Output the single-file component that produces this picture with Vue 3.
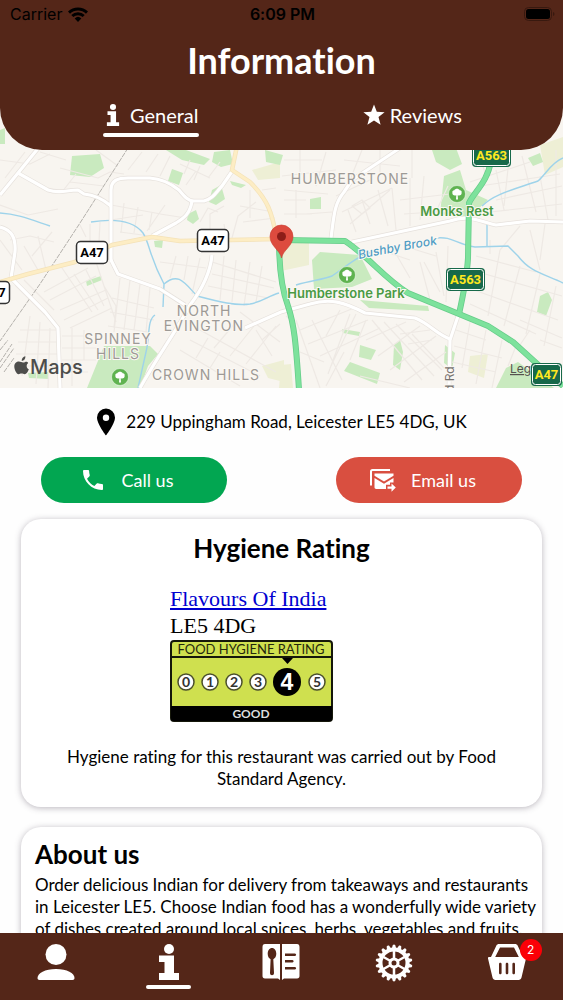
<script setup>
import { ref } from 'vue'

const activeTab = ref('general')
const basketCount = ref(2)

// Map geometry
const parks = [
  'M72 156l28-2 4 14-14 9-20-2z',
  'M166 150h20l24 9-6 6-22-5z',
  'M214 152l16-2 3 14-12 3-9-5z',
  'M172 169l11 4-4 12-11-4z',
  'M212 190l9-5 4 14-9 6-7-3z',
  'M188 214l8-4 3 9-6 5-6-4z',
  'M154 241l9-1-1 8-7-1z',
  'M86 281l15-5 1 4-15 6z',
  'M104 346h46l8 8-10 12-8 22H87z',
  'M28 373l20-1 1 7-20-1z',
  'M0 130l5-2v16H0z',
  'M432 150l24-2 6 16-12 6-14-8z',
  'M444 176l16-6 6 20 22 10-20 18-28-4z',
  'M312 260l8-8 40 3 12 24-20 8-38 2z',
  'M360 300l68 6 1 5-60-3z',
  'M310 199l11-2v12h-11z',
  'M360 345l16 5-5 10-12-3z',
  'M350 362l30 11-3 11-33-13z',
  'M394 345l6-5 3 12-3 18-7-5z',
  'M342 329l18 3-1 4-16-3z',
  'M540 296l8-4 4 8-6 16-9-4z',
  'M506 368l12-6 36 26h-58z',
  'M445 345l10 8-3 16-8-6z',
  'M265 150l18 5-3 10-14-3z',
  'M230 181l16 4-5 3-9-3z',
  'M528 158l12-5 3 9-10 4z'
]

const paleAreas = [
  'M252 170l28-8v16l-22 2z',
  'M470 356l18-2-4 24-16-6z',
  'M262 366l22-6v22l-16-4z',
  'M281 235l28 4v26l-28 6z',
  'M281 365l10-1 2 24h-14z',
  'M540 145l23-8v30l-18 8z'
]

const minorStreets = [
  'M0 160l30 4 20-10M5 178l20-26M40 152l26 8M60 168l38 10 12-6 14 2M70 182l34 4M62 192l14-18M96 150l22 16',
  'M0 205l28 10 30-6M10 240l20-4 24 6M24 246l14 24M38 236l8 34M0 240l22 30M52 232l-20 24M80 225l6 12M90 224v18M100 222l-1 20',
  'M111 205l50 9M111 220l32-5M124 203l-3 30M138 207l-4 26M152 212l-3 18M165 205l-18 26M120 232l30 4M160 214l26 4',
  'M180 164l30 14M190 160l-6 14M200 166l-6 14M128 170l14-18M146 172l12-18M160 176l10-20M208 178l12-16M186 185l10-14',
  'M200 222l8-14 10 4M210 236v-22l14-8M232 238l6-22 18-14M240 206l28 5M250 190v28M226 236l-2-12M243 222l32-4M262 190l14-2',
  'M15 285l30 30M24 280l30 30M62 268l30 44M74 274l24 36M86 270l18 36M60 310l46-20M64 320l44-22M70 328l42-20M50 300l46-24M44 292l44-24',
  'M120 278l-6 54M130 280l-6 50M140 284l-6 46M150 288l-4 44M112 298l42 10M110 312l44 8M108 326l40 6M104 286l12 20-2 22M96 262l20 60',
  'M20 330h40M18 342h42M16 354h44M22 366h38M30 316l-8 60M40 322l-4 62M50 328l-2 60M62 336h26M62 348h38M62 360h34M62 372h26M72 328v58M84 330v30',
  'M160 262l46 6M176 256l-6 22M188 256l-4 24M200 258l-8 36M212 262l64 20M212 274l62 14M208 286l60 12M224 256l-4 44M236 260l-4 42M250 262l-6 44M262 266l-6 36',
  'M190 340l70 36M200 330l76 42M214 348l22-26M230 356l24-30M246 364l30-38M180 350l60 36M196 358l12-20M210 368l10-16M240 312l40 30M256 330l16 26M262 340l18-16',
  'M284 160h38M282 176l54-6M300 150v30M326 152l-10 34M284 190l44 4M284 200h22M296 190v28M306 214l26-2M284 214h28M344 160l56 6M362 150l-12 30M380 150v24',
  'M342 212l50-24M350 224l40-34M356 232l-8-22M362 200l8 24M378 190l10 36M392 188l4 42M410 178v48M424 176l-4 44M400 200l66-8M404 214l60-4M336 196l34-16M352 206l10-6 8 8-8 6z',
  'M412 150v28M448 186l-14 30M478 150l8 26M496 170l8 40M510 150l-6 56M522 156l14 56M540 176l8 44M480 186l80-12M490 212l72-8M496 200l66-14M470 182l60-20M556 150v66',
  'M424 262l16 30M436 252l8 44M410 248l26 8M448 246l-2 56M396 254l14 24M380 250l30 10M430 300l-10-38M476 256l60 16M478 272l84 24M474 290l84 30M470 304l66 30M500 250l-12 66M520 266l-16 60M540 274l-14 60M556 286l-12 60M490 240v14M500 250l20-24M530 230l10 40M545 224l-5 36',
  'M300 330l54-22M308 344l60-24M320 356l60-28M330 368l26-54M312 320l30 60M296 320l24 68M350 314l-22 60M366 320l-16 40M300 352l24 10M326 386l18-34M340 310l-14 26M286 316l10 8',
  'M372 320l50 60M384 322l50 54M396 324l46 46M366 340l40-18M378 356l42-30M390 370l46-34M404 382l42-30M412 334l32 34M360 376l50 12M400 334l30-4M408 344l24-4',
  'M456 330l30 10M454 346l48 12M452 362l44 10M470 322l-8 46M486 330l-10 54M502 340l-10 48M516 346l-8 20M530 330l-12 18M540 340l22 8M520 320l42 18'
]

const railway = 'M128 148L80 223 40 284 0 341M0 362l12-18M0 368l14-20M4 372l10-14M0 350l8-10'

const water = [
  'M0 213C18 214 32 220 50 226',
  'M91 222C110 219 132 219 143 233C150 244 149 256 164 284',
  'M164 284C178 272 184 282 197 296C220 302 236 306 250 304C262 302 268 296 279 293',
  'M164 284L163 307',
  'M155 315C147 320 150 336 146 352L138 388',
  'M296 285C312 280 322 280 332 276C350 264 354 258 372 252',
  'M436 238C452 236 456 244 475 247L508 246L518 256C530 272 544 274 563 283',
  'M482 206C494 194 512 190 538 181C546 174 552 162 563 158',
  'M487 222V247'
]

const whiteRoads = [
  'M40 146L18 173L0 195',
  'M18 173L48 190C60 194 66 190 78 190L84 194C96 195 104 200 111 206',
  'M111 262V190C111 180 118 178 128 178H150C164 179 174 186 179 190C184 196 188 201 194 201H204C214 198 216 192 222 186L233 170',
  'M192 201C190 214 184 218 176 223L152 236',
  'M0 227C12 230 16 238 15 252L11 278L45 312L58 328L60 388',
  'M111 260L118 274L160 289L185 305',
  'M212 255C210 276 200 292 190 305C176 332 160 352 140 388',
  'M245 328L281 312L310 304C330 298 344 302 365 313L415 318C430 324 436 334 450 339',
  'M458 316L450 340L449 388',
  'M352 242L450 221C470 214 480 222 496 225L530 221L563 222',
  'M331 238C334 216 334 204 344 192L352 180L400 148'
]

const yellowRoads = [
  'M0 282L28 274L75 262L112 245L152 237L180 241L276 239',
  'M237 146L232 170L250 182C268 200 272 212 277 240'
]

const greenRoads = [
  'M281 240L345 241C368 256 384 278 408 293L459 314L488 326L513 342L545 371L563 386',
  'M279 240C279 268 282 290 288 306C294 324 296 342 299 390',
  'M491 160C488 182 474 192 469 203L468 258C467 276 463 296 459 314'
]

const areaLabels = [
  { x: 350, y: 184, text: 'HUMBERSTONE' },
  { x: 204, y: 316, text: 'NORTH' },
  { x: 204, y: 331, text: 'EVINGTON' },
  { x: 118, y: 344, text: 'SPINNEY' },
  { x: 118, y: 359, text: 'HILLS' },
  { x: 206, y: 380, text: 'CROWN HILLS' }
]

const trees = [
  { x: 457, y: 194 },
  { x: 347, y: 275 },
  { x: 120, y: 377 }
]

const plainShields = [
  { x: 197, y: 229, text: 'A47' },
  { x: 76, y: 241, text: 'A47' },
  { x: -22, y: 281, text: 'A47' }
]

const greenShields = [
  { x: 472, y: 144, width: 39, text: 'A563' },
  { x: 446, y: 268, width: 39, text: 'A563' },
  { x: 531, y: 363, width: 31, text: 'A47' }
]

const ratings = [
  { value: 0, x: 16 },
  { value: 1, x: 40 },
  { value: 2, x: 64 },
  { value: 3, x: 88 },
  { value: 5, x: 147 }
]

const gearTeeth = Array.from({ length: 18 }, (_, i) => i * 20)
</script>

<template>
  <div class="screen">
    <header class="header">
      <div class="status">
        <span class="carrier">
          Carrier
          <svg width="20" height="15" viewBox="0 0 20 15" aria-hidden="true">
            <g fill="none" stroke="#000" stroke-width="3">
              <path d="M1 5.600A13 13 0 0 1 19 5.600" />
              <path d="M4.300 9A8.300 8.300 0 0 1 15.700 9" />
            </g>
            <path d="M10 15l-3.300-3.600a4.800 4.800 0 0 1 6.600 0z" />
          </svg>
        </span>
        <strong>6:09 PM</strong>
        <svg class="battery" width="31" height="14" viewBox="0 0 31 14" aria-hidden="true">
          <rect x=".5" y=".5" width="27" height="13" rx="4" fill="none" stroke="#38190f" />
          <rect x="2" y="2" width="24" height="10" rx="2.500" />
          <path d="M29 5c2 .8 2 3.200 0 4z" fill="#38190f" />
        </svg>
      </div>
      <h1>Information</h1>
      <div class="tabs">
        <div class="tab-cell">
          <button class="tab" :class="{ active: activeTab === 'general' }" @click="activeTab = 'general'">
            <svg class="tab-info" width="14" height="22" viewBox="0 0 20 36" aria-hidden="true">
              <circle cx="10" cy="5" r="5" />
              <path d="M1 12h14v18h5v6H0v-6h6V18H1z" />
            </svg>
            General
          </button>
        </div>
        <div class="tab-cell">
          <button class="tab" :class="{ active: activeTab === 'reviews' }" @click="activeTab = 'reviews'">
            <svg width="22" height="22" viewBox="0 0 22 22" aria-hidden="true">
              <path d="M11 .5l2.800 7.300 7.800.4-6.100 4.900 2.100 7.700-6.600-4.300-6.600 4.300 2.100-7.700L.4 8.200l7.800-.4z" />
            </svg>
            Reviews
          </button>
        </div>
      </div>
    </header>

    <main class="content">
      <svg class="map" viewBox="0 100 563 288" preserveAspectRatio="xMidYMid slice" role="img" aria-label="Map">
        <rect y="100" width="563" height="288" fill="#f8f5f0" />
        <path v-for="d in paleAreas" :key="d" :d="d" fill="#eeefd5" />
        <path v-for="d in parks" :key="d" :d="d" fill="#c9eabf" />
        <path v-for="d in minorStreets" :key="d" :d="d" class="minor" />
        <path :d="railway" class="railway" />
        <path v-for="d in water" :key="d" :d="d" class="water" />
        <path v-for="d in whiteRoads" :key="d" :d="d" class="road-edge" />
        <path v-for="d in whiteRoads" :key="d" :d="d" class="road-white" />
        <path v-for="d in yellowRoads" :key="d" :d="d" class="road-yellow-edge" />
        <path v-for="d in yellowRoads" :key="d" :d="d" class="road-yellow" />
        <path v-for="d in greenRoads" :key="d" :d="d" class="road-green-edge" />
        <path v-for="d in greenRoads" :key="d" :d="d" class="road-green" />

        <text v-for="label in areaLabels" :key="label.text" :x="label.x" :y="label.y" class="area">{{ label.text }}</text>
        <path id="brook" d="M359 259Q398 251 440 244" fill="none" />
        <text class="brook"><textPath href="#brook">Bushby Brook</textPath></text>
        <g v-for="tree in trees" :key="tree.x" :transform="`translate(${tree.x} ${tree.y})`">
          <circle r="8.500" fill="#5fb350" stroke="#fff" stroke-opacity=".5" />
          <path
            d="M-1 5.500l.3-4.200C-3 2-5 .8-4.600-1.200c-.5-1.600.8-2.800 2-2.600C-2-5.800 2-5.800 2.600-3.800c1.400-.2 2.500 1 2 2.600C5 .8 3 2 .7 1.300L1 5.500z"
            fill="#fff"
          />
        </g>
        <text x="457" y="216" class="park">Monks Rest</text>
        <text x="346" y="298" class="park">Humberstone Park</text>
        <text transform="translate(454 392) rotate(-90)" class="street">d Rd</text>

        <a href="#legal"><text x="510" y="373" class="legal">Legal</text></a>

        <g v-for="shield in plainShields" :key="shield.x" :transform="`translate(${shield.x} ${shield.y})`">
          <rect x=".5" y=".5" width="31" height="22" rx="4" fill="#fff" stroke="#333" stroke-width="1.500" />
          <text x="16" y="16" class="shield">{{ shield.text }}</text>
        </g>
        <g v-for="shield in greenShields" :key="shield.y" :transform="`translate(${shield.x} ${shield.y})`">
          <rect :width="shield.width" height="23" rx="4" fill="#17694a" />
          <rect x="1.500" y="1.500" :width="shield.width - 3" height="20" rx="3" fill="none" stroke="#fff" />
          <text :x="shield.width / 2" y="16" class="shield yellow">{{ shield.text }}</text>
        </g>

        <path
          d="M281.500 258c-1.500-8-11.500-12-11.500-21.500a11.500 11.500 0 0 1 23 0c0 9.500-10 13.500-11.500 21.500z"
          fill="#dd4b3e"
          stroke="#c93c31"
          stroke-width=".6"
        />
        <circle cx="281.500" cy="236.500" r="4.500" fill="#8c1d18" />

        <g fill="#4d4d4b">
          <path
            d="M24.800 362.200c1.500-1 2.800-.2 3.400.7-2.200 1.500-2 5 .6 6.300-1 2.600-2.400 5-4.100 5-1.200 0-1.800-.7-3.100-.7s-2 .7-3 .7c-2.100 0-4.300-4.500-4.300-7.700 0-4.300 4-6 6.900-4.400 1.200.6 2.400.6 3.600.1z"
          />
          <path d="M21.700 361c-.2-2.600 1.600-4.300 3.700-4.700.3 2.600-1.500 4.600-3.700 4.700z" />
          <text x="30" y="374" class="maps-logo">Maps</text>
        </g>
      </svg>

      <p class="address">
        <svg width="20" height="28" viewBox="0 0 20 28" aria-hidden="true">
          <path
            fill-rule="evenodd"
            d="M10 .5A9 9 0 0 0 1 9.500C1 16 10 27.500 10 27.500S19 16 19 9.500A9 9 0 0 0 10 .5zm0 6a3.200 3.200 0 1 1 0 6.400 3.200 3.200 0 0 1 0-6.400z"
          />
        </svg>
        229 Uppingham Road, Leicester LE5 4DG, UK
      </p>

      <div class="actions">
        <button class="action call">
          <svg width="20" height="20" viewBox="3 3 18 18" aria-hidden="true">
            <path
              d="M6.620 10.790c1.440 2.830 3.760 5.140 6.590 6.590l2.200-2.200c.27-.27.67-.36 1.020-.24 1.120.37 2.330.57 3.570.57.550 0 1 .45 1 1V20c0 .55-.45 1-1 1-9.390 0-17-7.610-17-17 0-.55.45-1 1-1h3.500c.55 0 1 .45 1 1 0 1.250.2 2.450.57 3.570.11.35.03.74-.25 1.020l-2.200 2.200z"
            />
          </svg>
          Call us
        </button>
        <button class="action email">
          <svg width="26" height="23" viewBox="0 0 26 23" aria-hidden="true">
            <path d="M1 16.500V2.500C1 1.500 1.500 1 2.500 1H20" fill="none" stroke="#fff" stroke-width="2" />
            <path d="M4.500 4.500h19v2.200L14 12.500 4.500 6.700z" />
            <path d="M4.500 9l9.500 5.800L23.500 9v4.500H20v2.300h-4v4.200H6.200c-1 0-1.700-.7-1.700-1.700z" />
            <path d="M17.500 17.400h4v-2.900l4.300 4.100-4.300 4.100v-2.900h-4z" />
          </svg>
          Email us
        </button>
      </div>

      <section class="card hygiene">
        <h2>Hygiene Rating</h2>
        <div class="widget">
          <a href="#rating">Flavours Of India</a>
          <span>LE5 4DG</span>
          <svg width="163" height="82" viewBox="0 0 163 82" role="img" aria-label="Food hygiene rating: 4, good">
            <rect x="1" y="1" width="161" height="80" rx="3" fill="#cfe04f" stroke="#15170a" stroke-width="2" />
            <path d="M1 66h161v13a2 2 0 0 1-2 2H3a2 2 0 0 1-2-2z" />
            <path d="M1 17h161" stroke="#15170a" stroke-width="2" />
            <path d="M112 18h11l-5.500 6z" />
            <text x="81" y="14" class="fhr-title">FOOD HYGIENE RATING</text>
            <g v-for="item in ratings" :key="item.value">
              <circle :cx="item.x" cy="42" r="8" fill="#fff" stroke="#4b4f2c" stroke-width="1.500" />
              <text :x="item.x" y="47" class="fhr-digit">{{ item.value }}</text>
            </g>
            <circle cx="117" cy="42" r="14" />
            <text x="117" y="50" class="fhr-score">4</text>
            <text x="81" y="78" class="fhr-word">GOOD</text>
          </svg>
        </div>
        <p>Hygiene rating for this restaurant was carried out by Food Standard Agency.</p>
      </section>

      <section class="card about">
        <h2>About us</h2>
        <p>
          Order delicious Indian for delivery from takeaways and restaurants in Leicester LE5. Choose Indian food has a
          wonderfully wide variety of dishes created around local spices, herbs, vegetables and fruits.
        </p>
      </section>
    </main>

    <nav class="nav">
      <a href="#account" aria-label="Account">
        <svg width="38" height="36" viewBox="0 0 38 36">
          <circle cx="19" cy="10.500" r="10.500" />
          <path d="M.5 34C.5 29 8 25 19 25s18.500 4 18.500 9c0 1.300-.7 2-2 2h-33c-1.300 0-2-.7-2-2z" />
        </svg>
      </a>
      <a href="#info" aria-label="Information" class="current">
        <svg width="20" height="36" viewBox="0 0 20 36">
          <circle cx="10" cy="5" r="5" />
          <path d="M0 11.500h15V29h5v7H0v-7h5.500V18H0z" />
        </svg>
      </a>
      <a href="#menu" aria-label="Menu">
        <svg width="38" height="36" viewBox="0 0 38 36">
          <path
            fill-rule="evenodd"
            d="M3 0h15v36l-2-1.500H3C1.300 34.500.5 33.500.5 32V3C.5 1 1.300 0 3 0zm7 4c-2.600 0-4.300 2.700-4.300 5.800 0 2.600 1.100 4.600 2.900 5.400L8 29c0 3 4 3 4 0l-.7-13.800c1.800-.8 3-2.800 3-5.400C14.300 6.700 12.600 4 10 4z"
          />
          <path
            fill-rule="evenodd"
            d="M35 0H20v36l2-1.500h13c1.700 0 2.500-1 2.500-2.500V3c0-2-.8-3-2.500-3zM23 9.500h10c1.500 0 1.500 2.500 0 2.500H23zM23 16h7.500c1.500 0 1.500 2.500 0 2.500H23zM23 23h10c1.500 0 1.500 2.500 0 2.500H23z"
          />
        </svg>
      </a>
      <a href="#settings" aria-label="Settings">
        <svg width="38" height="38" viewBox="-19 -19 38 38">
          <circle r="13.500" fill="none" stroke="#fff" stroke-width="4" />
          <circle r="4" fill="none" stroke="#fff" stroke-width="3" />
          <path
            d="M0-4v-8M0 4v8M3.500-2l7-4M3.500 2l7 4M-3.500-2l-7-4M-3.500 2l-7 4"
            stroke="#fff"
            stroke-width="2.500"
          />
          <path
            v-for="angle in gearTeeth"
            :key="angle"
            d="M-2.200-14.500l1-3.600q1.200-.8 2.400 0l1 3.600z"
            :transform="`rotate(${angle})`"
          />
        </svg>
      </a>
      <a href="#basket" aria-label="Basket">
        <span class="basket">
          <svg width="38" height="36" viewBox="0 0 38 36">
            <path
              fill-rule="evenodd"
              d="M11 0h16c1.200 0 2 .5 2.600 1.500L35 13h2c.9 0 1.200.6 1 1.500l-4.500 19c-.4 1.500-1.400 2.500-3 2.500h-23c-1.600 0-2.600-1-3-2.500L0 14.500C-.2 13.600.1 13 1 13h2L8.400 1.500C9 .5 9.800 0 11 0zm1 3.500L7.200 13h23.600L26 3.500zM11 20v9c0 1.700 2.600 1.700 2.600 0v-9c0-1.700-2.600-1.700-2.600 0zm6.700 0v9c0 1.700 2.600 1.700 2.600 0v-9c0-1.700-2.600-1.700-2.600 0zm6.700 0v9c0 1.700 2.600 1.700 2.600 0v-9c0-1.700-2.600-1.700-2.600 0z"
            />
          </svg>
          <span class="badge">{{ basketCount }}</span>
        </span>
      </a>
    </nav>
  </div>
</template>

<style>
body {
  margin: 0;
  background: #fefefe;
}
</style>

<style scoped>
.screen {
  display: flex;
  flex-direction: column;
  height: 100vh;
  font-family: Lato, sans-serif;
  font-variant-ligatures: none;
  color: #000;
}

h1,
h2,
p {
  margin: 0;
}

button {
  border: none;
  font-family: inherit;
  cursor: pointer;
}

.header {
  position: relative;
  z-index: 1;
  flex: none;
  box-sizing: border-box;
  height: 150px;
  background: #542618;
  border-radius: 0 0 42px 42px;
  color: #fff;
}

.status {
  display: grid;
  grid-template-columns: 1fr auto 1fr;
  align-items: center;
  height: 28px;
  padding: 0 8px 0 10px;
  font-family: Inter, sans-serif;
  font-size: 16px;
  color: #000;
}

.status strong {
  font-weight: 600;
}

.carrier {
  display: flex;
  align-items: center;
  gap: 6px;
}

.battery {
  justify-self: end;
}

h1 {
  font-size: 36px;
  line-height: 44px;
  margin-top: 10px;
  text-align: center;
  font-weight: 700;
}

.tabs {
  display: flex;
  margin-top: 19px;
  padding: 0 20px;
}

.tab-cell {
  flex: 1;
  display: flex;
  justify-content: center;
}

.tab {
  position: relative;
  display: flex;
  align-items: center;
  gap: 5px;
  padding: 0 0 8px;
  background: none;
  color: #fff;
  font-size: 20px;
  line-height: 28px;
}

.tab.active::after {
  content: '';
  position: absolute;
  left: 0;
  right: 0;
  bottom: 0;
  height: 4px;
  border-radius: 2px;
  background: #fff;
}

.tab svg {
  fill: #fff;
}

.tab-info {
  margin: 0 5px 0 3px;
}

.content {
  flex: 1;
  min-height: 0;
  overflow-y: auto;
  scrollbar-width: none;
  margin-top: -50px;
}

.map {
  display: block;
  width: 100%;
  height: 288px;
  font-family: Inter, sans-serif;
}

.minor,
.railway,
.water,
.road-edge,
.road-white,
.road-yellow-edge,
.road-yellow,
.road-green-edge,
.road-green {
  fill: none;
  stroke-linejoin: round;
}

.minor {
  stroke: #eee9e4;
  stroke-width: 1.2;
}

.railway {
  stroke: #b4b1ac;
  stroke-width: 1;
  stroke-dasharray: 5 1;
}

.water {
  stroke: #9ed3ea;
  stroke-width: 1.4;
}

.road-edge {
  stroke: #e6e1dc;
  stroke-width: 4.5;
}

.road-white {
  stroke: #fff;
  stroke-width: 3.2;
}

.road-yellow-edge {
  stroke: #f4e2b8;
  stroke-width: 4.5;
}

.road-yellow {
  stroke: #fdedc4;
  stroke-width: 3;
}

.road-green-edge {
  stroke: #66cc89;
  stroke-width: 6;
}

.road-green {
  stroke: #7de29c;
  stroke-width: 4.5;
}

.area,
.park,
.brook,
.street {
  paint-order: stroke;
  stroke: #fbf8f3;
  stroke-width: 2;
}

.area {
  font-size: 14px;
  letter-spacing: 1px;
  text-anchor: middle;
  fill: #9d9a96;
}

.park {
  font-size: 13px;
  font-weight: 600;
  text-anchor: middle;
  fill: #4a9a44;
}

.brook {
  font-size: 12px;
  font-style: italic;
  font-weight: 500;
  fill: #4e9cc4;
}

.street {
  font-size: 12px;
  fill: #77736f;
}

.legal {
  font-size: 12px;
  fill: #55524f;
  text-decoration: underline;
}

.shield {
  font-family: 'Liberation Sans Narrow', Roboto, sans-serif;
  font-size: 13px;
  font-weight: 700;
  text-anchor: middle;
}

.yellow {
  fill: #ffe81f;
}

.maps-logo {
  font-size: 20px;
  font-weight: 500;
}

.address {
  display: flex;
  align-items: center;
  justify-content: center;
  gap: 10px;
  margin-top: 20px;
  line-height: 28px;
  font-size: 17px;
}

.actions {
  display: flex;
  justify-content: space-between;
  gap: 20px;
  margin-top: 21px;
  padding: 0 41px;
}

.action {
  flex: 0 1 186px;
  display: flex;
  align-items: center;
  justify-content: center;
  height: 46px;
  padding: 0 12px 0 0;
  border-radius: 23px;
  color: #fff;
  font-size: 18px;
}

.action svg {
  fill: #fff;
}

.call {
  gap: 19px;
  background: #02a651;
}

.email {
  gap: 15px;
  background: #d94f40;
}

.card {
  margin: 16px 21px 0;
  border-radius: 20px;
  background: #fff;
  box-shadow: 0 1px 6px rgba(60, 50, 70, 0.35);
}

h2 {
  font-size: 26px;
  line-height: 30px;
  font-weight: 700;
}

.card p {
  font-size: 17px;
  line-height: 22px;
}

.hygiene {
  display: flex;
  flex-direction: column;
  align-items: center;
  padding: 14px 40px 17px;
  text-align: center;
}

.widget {
  display: flex;
  flex-direction: column;
  width: 223px;
  margin: 22px 0 24px;
  font-family: 'Liberation Serif', serif;
  font-size: 22px;
  line-height: 27px;
  text-align: left;
}

.widget svg {
  margin-top: 1px;
}

.widget a {
  color: #0000d0;
}

.fhr-title,
.fhr-digit,
.fhr-score,
.fhr-word {
  text-anchor: middle;
  font-family: Lato, sans-serif;
}

.fhr-title {
  font-size: 13px;
  fill: #24280c;
}

.fhr-digit {
  font-size: 14px;
  font-weight: 700;
  fill: #333;
}

.fhr-score {
  font-family: 'Liberation Sans', sans-serif;
  font-size: 23px;
  font-weight: 700;
  fill: #fff;
}

.fhr-word {
  font-size: 12px;
  font-weight: 700;
  fill: #ddd;
}

.about {
  margin-top: 20px;
  padding: 12px 4px 12px 14px;
}

.about p {
  margin-top: 5px;
}

.nav {
  position: relative;
  z-index: 1;
  flex: none;
  display: flex;
  height: 67px;
  background: #542618;
}

.nav a {
  flex: 1;
  display: flex;
  flex-direction: column;
  align-items: center;
  padding-top: 11px;
}

.nav svg {
  display: block;
  fill: #fff;
}

.current::after {
  content: '';
  width: 45px;
  height: 4px;
  margin-top: 5px;
  border-radius: 2px;
  background: #fff;
}

.basket {
  position: relative;
}

.badge {
  position: absolute;
  top: -5px;
  right: -16px;
  width: 22px;
  height: 22px;
  border-radius: 50%;
  background: #fb0007;
  color: #fff;
  font-family: Inter, sans-serif;
  font-size: 12px;
  line-height: 22px;
  text-align: center;
}
</style>
